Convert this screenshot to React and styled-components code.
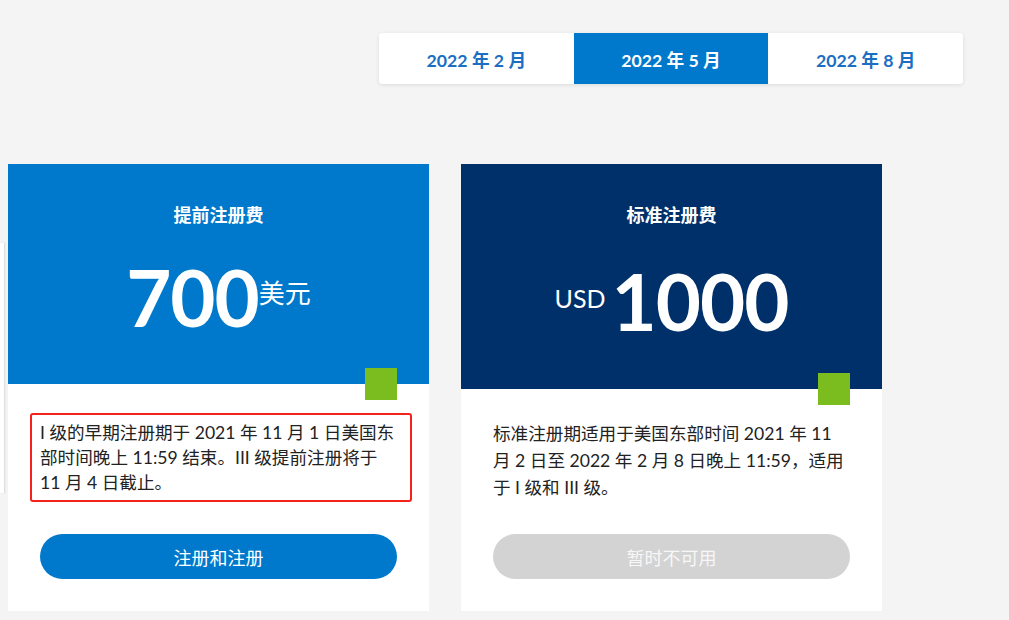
import styled, { createGlobalStyle } from 'styled-components';

const GlobalStyle = createGlobalStyle`
  body {
    margin: 0;
    background: #f4f4f4;
    font-family: Lato, "Noto Sans CJK SC", sans-serif;
  }
`;

const tabs = ['2022 年 2 月', '2022 年 5 月', '2022 年 8 月'];

function App() {
  return (
    <Page>
      <GlobalStyle />
      <SidePeek />
      <TabBar>
        {tabs.map((t, i) => (
          <Tab key={t} active={i === 1}>
            {t}
          </Tab>
        ))}
      </TabBar>
      <Cards>
        <Card>
          <Header bg="#0079cc" height="220px">
            <Title>提前注册费</Title>
            <Price offset="31px">
              <Amount>700</Amount>
              <Unit raise="4px">美元</Unit>
            </Price>
            <Badge />
          </Header>
          <Body pad="29px">
            <Marked>
              I 级的早期注册期于 2021 年 11 月 1 日美国东部时间晚上 11:59 结束。III 级提前注册将于 11 月 4 日截止。
            </Marked>
            <Button>注册和注册</Button>
          </Body>
        </Card>
        <Card>
          <Header bg="#003069" height="225px">
            <Title>标准注册费</Title>
            <Price offset="35px">
              <Unit gap="6px" raise="3px" small>
                USD
              </Unit>
              <Amount>1000</Amount>
            </Price>
            <Badge />
          </Header>
          <Body pad="31px">
            <Text>
              标准注册期适用于美国东部时间 2021 年 11 月 2 日至 2022 年 2 月 8 日晚上 11:59，适用于 I 级和 III 级。
            </Text>
            <Button disabled>暂时不可用</Button>
          </Body>
        </Card>
      </Cards>
    </Page>
  );
}

export default App;

const Page = styled.div`
  position: relative;
  min-height: 620px;
  overflow: hidden;
`;

const SidePeek = styled.div`
  position: absolute;
  left: 0;
  top: 243px;
  width: 4px;
  height: 250px;
  background: #fff;
  box-shadow: 1px 0 2px rgba(0, 0, 0, 0.12);
`;

const TabBar = styled.div`
  display: flex;
  width: 584px;
  margin: 33px 0 0 379px;
  background: #fff;
  border-radius: 4px;
  box-shadow: 0 1px 4px rgba(0, 0, 0, 0.1);
  overflow: hidden;
`;

const Tab = styled.div`
  flex: 1;
  height: 51px;
  display: flex;
  align-items: center;
  justify-content: center;
  font-size: 17.7px;
  font-weight: 700;
  color: ${(p) => (p.active ? '#fff' : '#1b6ec2')};
  background: ${(p) => (p.active ? '#0078cc' : '#fff')};
`;

const Cards = styled.div`
  display: flex;
  gap: 32px;
  margin: 80px 0 0 8px;
`;

const Card = styled.div`
  width: 421px;
  height: 447px;
  background: #fff;
  display: flex;
  flex-direction: column;
`;

const Header = styled.div`
  position: relative;
  height: ${(p) => p.height};
  flex-shrink: 0;
  background: ${(p) => p.bg};
  color: #fff;
  padding-top: 39px;
  box-sizing: border-box;
  text-align: center;
`;

const Title = styled.div`
  font-size: 18px;
  font-weight: 700;
  line-height: 24px;
`;

const Price = styled.div`
  display: flex;
  justify-content: center;
  align-items: center;
  margin-top: ${(p) => p.offset};
  height: 78px;
`;

const Amount = styled.span`
  font-size: 78px;
  font-weight: 700;
  line-height: 1;
  letter-spacing: -1px;
`;

const Unit = styled.span`
  font-size: ${(p) => (p.small ? '25px' : '26px')};
  line-height: 1;
  margin-right: ${(p) => p.gap || '0'};
  position: relative;
  top: -${(p) => p.raise || '0'};
`;

const Badge = styled.div`
  position: absolute;
  right: 32px;
  bottom: -16px;
  width: 32px;
  height: 32px;
  background: #7bbd1f;
`;

const Body = styled.div`
  flex: 1;
  display: flex;
  flex-direction: column;
  padding: ${(p) => p.pad} 32px 32px;
`;

const Text = styled.p`
  margin: 0;
  font-size: 17.6px;
  line-height: 27px;
  color: #222;
`;

const Marked = styled(Text)`
  line-height: 25px;
  margin: 0 -15px 0 -10px;
  padding: 5px 13px 5px 8px;
  border: 2px solid #f5221b;
  border-radius: 3px;
`;

const Button = styled.button`
  margin-top: auto;
  height: 45px;
  border: none;
  border-radius: 23px;
  font-family: inherit;
  font-size: 18px;
  color: ${(p) => (p.disabled ? '#f7f7f7' : '#fff')};
  background: ${(p) => (p.disabled ? '#d3d3d3' : '#0079cc')};
  cursor: ${(p) => (p.disabled ? 'default' : 'pointer')};
`;
